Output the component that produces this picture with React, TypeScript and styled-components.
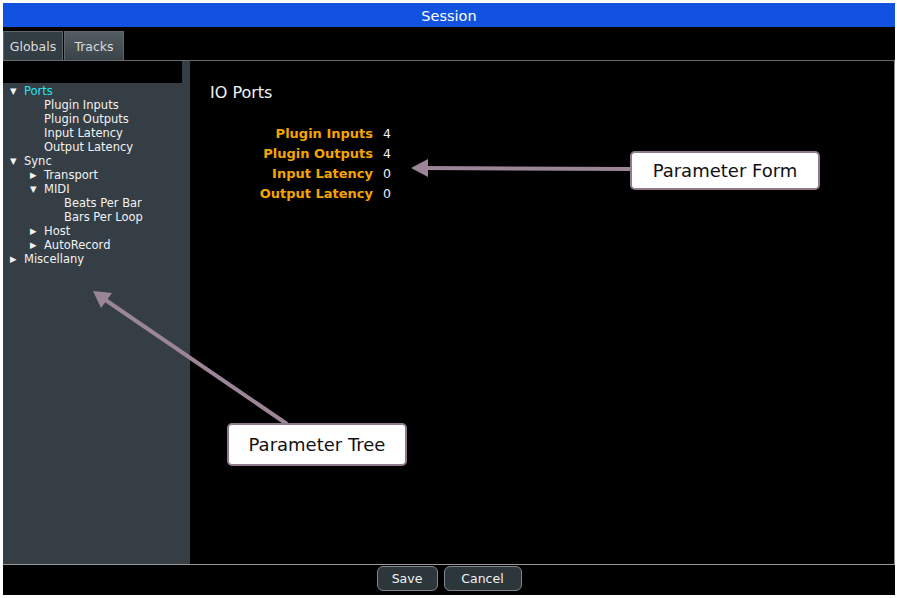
import React from "react";
import styled, {createGlobalStyle} from "styled-components";

const GlobalStyle = createGlobalStyle`
  html, body {
    margin: 0;
    padding: 0;
    background: #fff;
  }
  body {
    font-family: "DejaVu Sans", Verdana, sans-serif;
  }
`;

const Window = styled.div`
  position: relative;
  margin: 3px 0 0 3px;
  width: 892px;
  height: 592px;
  display: flex;
  flex-direction: column;
  background: #000;
`;

const TitleBar = styled.div`
  height: 24px;
  background: #1153e0;
  color: #fff;
  font-size: 14.5px;
  display: flex;
  align-items: center;
  justify-content: center;
  padding-top: 1px;
  box-sizing: border-box;
`;

const TabStrip = styled.div`
  height: 33px;
  display: flex;
  align-items: flex-end;
  gap: 1px;
`;

const Tab = styled.div<{ $active?: boolean }>`
  width: 60px;
  height: 29px;
  box-sizing: border-box;
  display: flex;
  align-items: center;
  justify-content: center;
  font-size: 12.5px;
  color: #dcdcdc;
  border: 1px solid #5d676b;
  border-bottom: none;
  background: ${p => p.$active ? "#323d44" : "linear-gradient(#535c60, #39444a)"};
`;

const Body = styled.div`
  height: 505px;
  box-sizing: border-box;
  display: flex;
  border-top: 1px solid #6a6a6a;
  border-right: 1px solid #8a8a8a;
  border-bottom: 1px solid #9a9a9a;
`;

const TreePanel = styled.div`
  width: 187px;
  background: #343e44;
  display: flex;
  flex-direction: column;
`;

const SearchStrip = styled.div`
  width: 179px;
  height: 22px;
  background: #000;
`;

const TreeList = styled.ul`
  list-style: none;
  margin: 0;
  padding: 1px 0 0 0;
`;

const TreeItem = styled.li<{ $level: number; $selected?: boolean }>`
  height: 14px;
  line-height: 14px;
  display: flex;
  align-items: center;
  padding-left: ${p => 7 + p.$level * 20}px;
  font-size: 11.5px;
  color: ${p => p.$selected ? "#22e6f2" : "#f2f2f2"};
  white-space: nowrap;
`;

const Toggle = styled.span`
  width: 14px;
  font-size: 8.5px;
  color: #f2f2f2;
`;

const FormPanel = styled.div`
  flex: 1;
  padding: 21px 0 0 20px;
`;

const FormTitle = styled.div`
  color: #f2f2f2;
  font-size: 16px;
  height: 22px;
  line-height: 22px;
`;

const FormGrid = styled.div`
  margin-top: 19px;
  display: grid;
  grid-template-columns: 163px auto;
  column-gap: 10px;
  grid-auto-rows: 20px;
  align-items: center;
`;

const FieldLabel = styled.div`
  text-align: right;
  color: #f5a400;
  font-weight: bold;
  font-size: 13px;
`;

const FieldValue = styled.div`
  color: #f2f2f2;
  font-size: 12.5px;
`;

const Footer = styled.div`
  flex: 1;
  display: flex;
  justify-content: center;
  align-items: flex-start;
  padding-top: 1px;
  gap: 6px;
`;

const Button = styled.button<{ $width: number }>`
  width: ${p => p.$width}px;
  height: 25px;
  border-radius: 6px;
  border: 1px solid #7e878b;
  background: #2c363b;
  color: #f2f2f2;
  font-family: inherit;
  font-size: 12.5px;
  padding: 0;
`;

const Callout = styled.div`
  position: absolute;
  box-sizing: border-box;
  background: #fff;
  border: 2px solid #8f7b8d;
  border-radius: 5px;
  color: #111;
  font-size: 18px;
  display: flex;
  align-items: center;
  justify-content: center;
`;

const Overlay = styled.svg`
  position: absolute;
  left: -3px;
  top: -3px;
  pointer-events: none;
`;

type Node = { label: string; level: number; toggle?: "open" | "closed"; selected?: boolean };

const tree: Node[] = [
  {label: "Ports", level: 0, toggle: "open", selected: true},
  {label: "Plugin Inputs", level: 1},
  {label: "Plugin Outputs", level: 1},
  {label: "Input Latency", level: 1},
  {label: "Output Latency", level: 1},
  {label: "Sync", level: 0, toggle: "open"},
  {label: "Transport", level: 1, toggle: "closed"},
  {label: "MIDI", level: 1, toggle: "open"},
  {label: "Beats Per Bar", level: 2},
  {label: "Bars Per Loop", level: 2},
  {label: "Host", level: 1, toggle: "closed"},
  {label: "AutoRecord", level: 1, toggle: "closed"},
  {label: "Miscellany", level: 0, toggle: "closed"},
];

const fields = [
  {label: "Plugin Inputs", value: "4"},
  {label: "Plugin Outputs", value: "4"},
  {label: "Input Latency", value: "0"},
  {label: "Output Latency", value: "0"},
];

const ARROW = "#9b8597";

const App = () => {
  return (
      <>
         <GlobalStyle/>
         <Window>
            <TitleBar>Session</TitleBar>
            <TabStrip>
               <Tab $active>Globals</Tab>
               <Tab>Tracks</Tab>
            </TabStrip>
            <Body>
               <TreePanel>
                  <SearchStrip/>
                  <TreeList>
                     {tree.map(node => (
                         <TreeItem key={node.label} $level={node.level} $selected={node.selected}>
                            <Toggle>{node.toggle === "open" ? "▼" : node.toggle === "closed" ? "▶" : ""}</Toggle>
                            {node.label}
                         </TreeItem>
                     ))}
                  </TreeList>
               </TreePanel>
               <FormPanel>
                  <FormTitle>IO Ports</FormTitle>
                  <FormGrid>
                     {fields.map(f => (
                         <React.Fragment key={f.label}>
                            <FieldLabel>{f.label}</FieldLabel>
                            <FieldValue>{f.value}</FieldValue>
                         </React.Fragment>
                     ))}
                  </FormGrid>
               </FormPanel>
            </Body>
            <Footer>
               <Button $width={61}>Save</Button>
               <Button $width={78}>Cancel</Button>
            </Footer>

            <Overlay width={897} height={598}>
               <line x1={632} y1={169} x2={424} y2={168} stroke={ARROW} strokeWidth={4}/>
               <polygon points="411,168 428,159 428,177" fill={ARROW}/>
               <line x1={287} y1={424} x2={104} y2={299} stroke={ARROW} strokeWidth={4}/>
               <polygon points="93,291 112,293 101,308" fill={ARROW}/>
            </Overlay>
            <Callout style={{left: 627, top: 148, width: 190, height: 39}}>Parameter Form</Callout>
            <Callout style={{left: 224, top: 420, width: 180, height: 43}}>Parameter Tree</Callout>
         </Window>
      </>
  );
};

export default App;
